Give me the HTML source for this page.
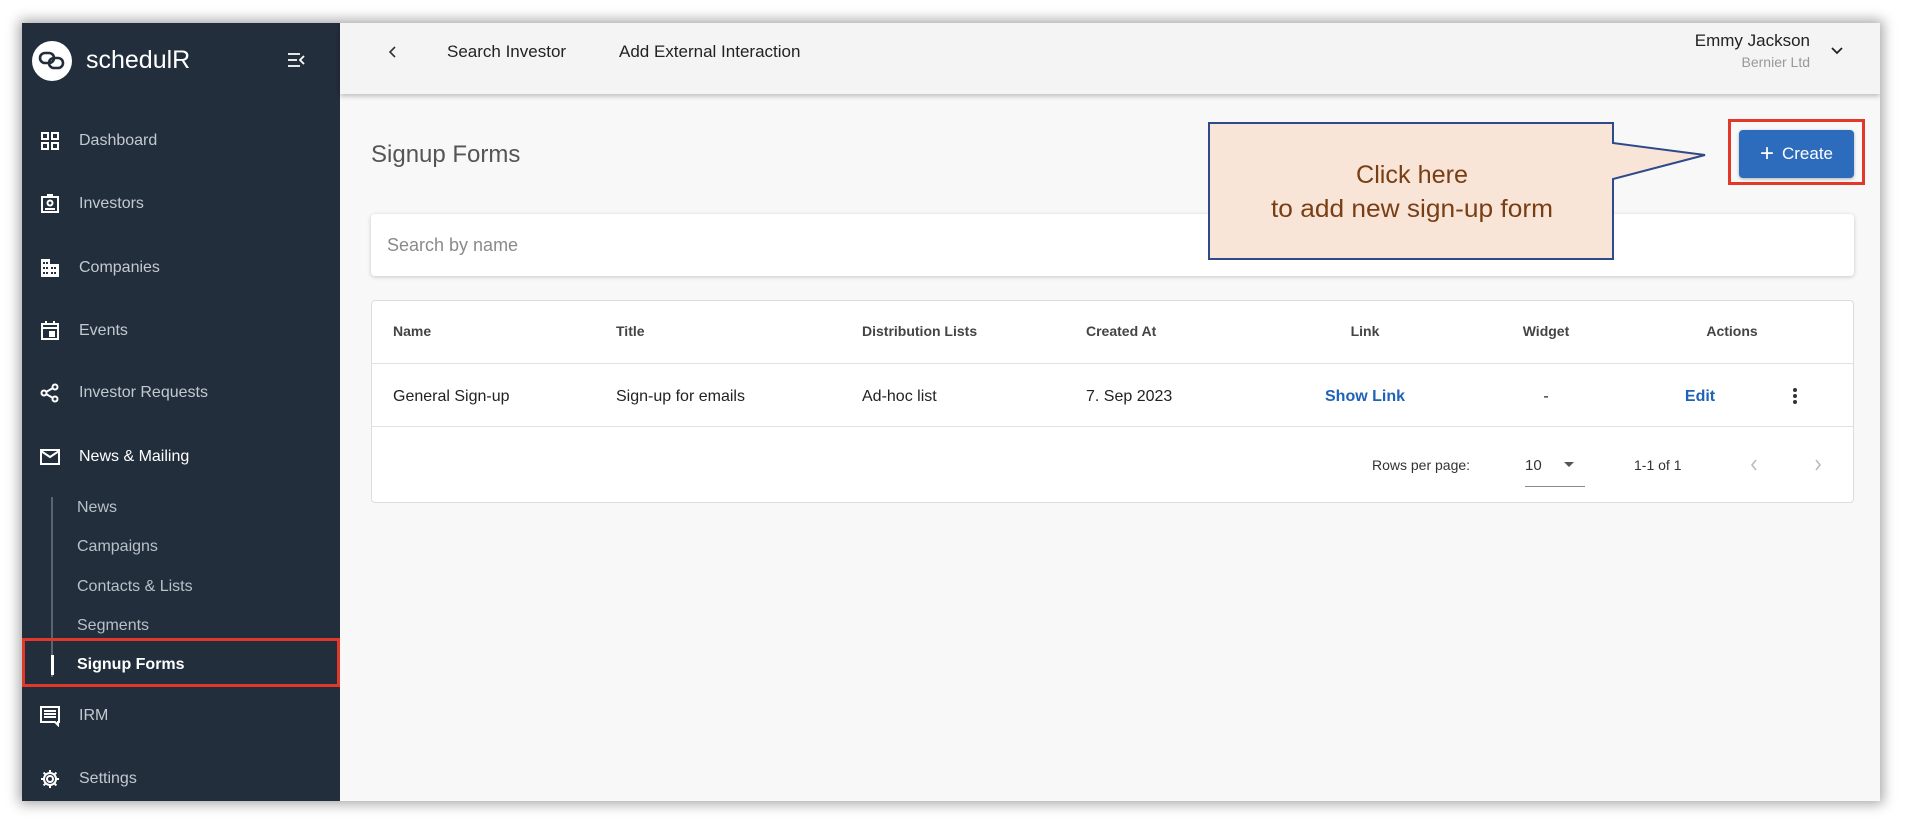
<!DOCTYPE html>
<html><head><meta charset="utf-8"><style>
*{box-sizing:border-box;margin:0;padding:0}
body{width:1910px;height:826px;background:#fff;font-family:"Liberation Sans",sans-serif;position:relative;overflow:hidden}
.frame{position:absolute;left:22px;top:23px;width:1858px;height:778px;background:#f8f8f8;box-shadow:0 0 12px 3px rgba(0,0,0,.35);overflow:hidden}
.side{position:absolute;left:0;top:0;width:318px;height:778px;background:#222e3c;color:#c9cfd6}
.abs{position:absolute}
.nav{position:absolute;left:57px;font-size:16px;color:#c3c9d0;transform:translateY(-50%)}
.ic{position:absolute;left:18px;transform:translateY(-50%)}
.sub{position:absolute;left:55px;font-size:16px;color:#b9c0c8;transform:translateY(-50%)}
.top{position:absolute;left:318px;top:0;width:1540px;height:71px;background:#f4f4f4;box-shadow:0 2px 5px rgba(0,0,0,.25)}
.card{position:absolute;background:#fff;border-radius:4px}
.th{position:absolute;top:20px;height:20px;line-height:20px;font-size:14px;font-weight:bold;color:#444}
.td{position:absolute;top:86px;height:20px;line-height:20px;font-size:16px;color:#222;white-space:nowrap}
.c{width:160px;margin-left:-80px;text-align:center}
</style></head><body>
<div class="frame">
 <div class="side">
  <div class="abs" style="left:10px;top:18px;width:40px;height:40px;border-radius:50%;background:#fff"></div>
  <svg class="abs" style="left:15px;top:27px" width="30" height="22" viewBox="0 0 30 22"><rect x="3" y="3" width="14" height="10" rx="5" fill="none" stroke="#222e3c" stroke-width="2.6"/><rect x="12" y="8" width="14" height="10" rx="5" fill="none" stroke="#222e3c" stroke-width="2.6"/></svg>
  <div class="abs" style="left:64px;top:23px;font-size:25px;color:#fff;font-weight:500">schedulR</div>
  <svg class="abs" style="left:264px;top:29px" width="20" height="16" viewBox="0 0 20 16"><path d="M2 2h12M2 8h9M2 14h12M18 4l-4 4 4 4" stroke="#fff" stroke-width="1.8" fill="none"/></svg>

  <svg class="ic" style="top:118px" width="20" height="20" viewBox="0 0 20 20" fill="none" stroke="#fff" stroke-width="2"><rect x="2" y="2" width="6" height="6"/><rect x="12" y="2" width="6" height="6"/><rect x="2" y="12" width="6" height="6"/><rect x="12" y="12" width="6" height="6"/></svg>
  <div class="nav" style="top:118px">Dashboard</div>
  <svg class="ic" style="top:181px" width="20" height="20" viewBox="0 0 20 20" fill="none" stroke="#fff" stroke-width="2"><rect x="2" y="3" width="16" height="15"/><circle cx="10" cy="9" r="2.5"/><path d="M5 15h10M7 1h6"/></svg>
  <div class="nav" style="top:181px">Investors</div>
  <svg class="ic" style="top:245px" width="20" height="20" viewBox="0 0 20 20" fill="#fff"><path d="M1 1h9v5h9v13H1zM3 4v2h2V4zm3 0v2h2V4zM3 9v2h2V9zm3 0v2h2V9zm5 0v2h2V9zm3 0v2h2V9zM3 14v2h2v-2zm3 0v2h2v-2zm5 0v2h2v-2zm3 0v2h2v-2z" fill-rule="evenodd"/></svg>
  <div class="nav" style="top:245px">Companies</div>
  <svg class="ic" style="top:308px" width="20" height="20" viewBox="0 0 20 20" fill="none" stroke="#fff" stroke-width="2"><rect x="2" y="3" width="16" height="15"/><path d="M2 7h16M6 0v4M14 0v4"/><rect x="10" y="11" width="4" height="4" fill="#fff"/></svg>
  <div class="nav" style="top:308px">Events</div>
  <svg class="ic" style="top:370px" width="20" height="20" viewBox="0 0 20 20" fill="none" stroke="#fff" stroke-width="2"><circle cx="15" cy="4" r="2.5"/><circle cx="4" cy="10" r="2.5"/><circle cx="15" cy="16" r="2.5"/><path d="M6 9l7-4M6 11l7 4"/></svg>
  <div class="nav" style="top:370px">Investor Requests</div>
  <svg class="ic" style="top:434px" width="20" height="20" viewBox="0 0 20 20" fill="none" stroke="#fff" stroke-width="2"><rect x="1" y="3" width="18" height="14"/><path d="M1 4l9 6 9-6"/></svg>
  <div class="nav" style="top:434px;color:#fff">News &amp; Mailing</div>
  <div class="abs" style="left:29px;top:474px;width:2px;height:180px;background:#5a6470"></div>
  <div class="sub" style="top:485px">News</div>
  <div class="sub" style="top:524px">Campaigns</div>
  <div class="sub" style="top:564px">Contacts &amp; Lists</div>
  <div class="sub" style="top:603px">Segments</div>
  <div class="abs" style="left:29px;top:632px;width:3px;height:20px;background:#fff"></div>
  <div class="sub" style="top:642px;color:#fff;font-weight:bold">Signup Forms</div>
  <div class="abs" style="left:0;top:615px;width:318px;height:49px;border:3px solid #e2382a"></div>
  <svg class="ic" style="top:693px" width="20" height="22" viewBox="0 0 20 22" fill="none" stroke="#fff" stroke-width="2"><path d="M1 2h18v15h-1v3l-3-3H1z"/><path d="M4 6h12M4 9h12M4 12h12"/></svg>
  <div class="nav" style="top:693px">IRM</div>
  <svg class="ic" style="top:756px" width="20" height="20" viewBox="0 0 20 20" fill="none" stroke="#fff" stroke-width="2"><circle cx="10" cy="10" r="3"/><path d="M10 1v3M10 16v3M1 10h3M16 10h3M3.6 3.6l2.1 2.1M14.3 14.3l2.1 2.1M3.6 16.4l2.1-2.1M14.3 5.7l2.1-2.1"/><circle cx="10" cy="10" r="6"/></svg>
  <div class="nav" style="top:756px">Settings</div>
 </div>

 <div class="top">
  <svg class="abs" style="left:47px;top:22px" width="12" height="14" viewBox="0 0 12 14"><path d="M8 2L3 7l5 5" stroke="#333" stroke-width="1.6" fill="none"/></svg>
  <div class="abs" style="left:107px;top:19px;font-size:17px;color:#222">Search Investor</div>
  <div class="abs" style="left:279px;top:19px;font-size:17px;color:#222">Add External Interaction</div>
  <div class="abs" style="right:70px;top:8px;font-size:17px;color:#222;text-align:right">Emmy Jackson</div>
  <div class="abs" style="right:70px;top:31px;font-size:14px;color:#999;text-align:right">Bernier Ltd</div>
  <svg class="abs" style="left:1490px;top:23px" width="14" height="10" viewBox="0 0 14 10"><path d="M2 2l5 5 5-5" stroke="#222" stroke-width="1.8" fill="none"/></svg>
 </div>

 <div class="abs" style="left:349px;top:118px;font-size:24px;color:#555">Signup Forms</div>

 <div class="abs" style="left:1706px;top:96px;width:137px;height:66px;border:3px solid #e2382a"></div>
 <div class="abs" style="left:1717px;top:107px;width:115px;height:48px;background:#2d6bbd;border-radius:4px;color:#fff;font-size:17px;line-height:48px;text-align:center;box-shadow:0 1px 3px rgba(0,0,0,.3)"><span style="font-size:24px;vertical-align:-2px;margin-right:8px">+</span>Create</div>

 <div class="card" style="left:349px;top:191px;width:1483px;height:62px;box-shadow:0 1px 4px rgba(0,0,0,.2)">
  <div class="abs" style="left:16px;top:21px;font-size:18px;color:#8a8a8a">Search by name</div>
 </div>

 <svg class="abs" style="left:1185px;top:98px" width="525" height="140" viewBox="0 0 525 140">
  <path d="M2 2H406V22L498 34L406 58V138H2Z" fill="#f8e5d8" stroke="#2e4a8a" stroke-width="2"/>
  <text x="205" y="62" text-anchor="middle" font-family="Liberation Sans, sans-serif" font-size="25" fill="#7a3e14" textLength="112" lengthAdjust="spacingAndGlyphs">Click here</text>
  <text x="205" y="96" text-anchor="middle" font-family="Liberation Sans, sans-serif" font-size="25" fill="#7a3e14" textLength="282" lengthAdjust="spacingAndGlyphs">to add new sign-up form</text>
 </svg>

 <div class="card" style="left:349px;top:277px;width:1483px;height:203px;border:1px solid #ddd">
  <div class="th" style="left:21px">Name</div>
  <div class="th" style="left:244px">Title</div>
  <div class="th" style="left:490px">Distribution Lists</div>
  <div class="th" style="left:714px">Created At</div>
  <div class="th c" style="left:993px">Link</div>
  <div class="th c" style="left:1174px">Widget</div>
  <div class="th c" style="left:1360px">Actions</div>
  <div class="abs" style="left:0;top:62px;width:100%;height:1px;background:#e2e2e2"></div>
  <div class="td" style="left:21px">General Sign-up</div>
  <div class="td" style="left:244px">Sign-up for emails</div>
  <div class="td" style="left:490px">Ad-hoc list</div>
  <div class="td" style="left:714px">7. Sep 2023</div>
  <div class="td c" style="left:993px;color:#1e63b8;font-weight:bold">Show Link</div>
  <div class="td c" style="left:1174px">-</div>
  <div class="td c" style="left:1328px;color:#1e63b8;font-weight:bold">Edit</div>
  <svg class="abs" style="left:1420px;top:86px" width="6" height="18" viewBox="0 0 6 18" fill="#333"><circle cx="3" cy="3" r="2"/><circle cx="3" cy="9" r="2"/><circle cx="3" cy="15" r="2"/></svg>
  <div class="abs" style="left:0;top:125px;width:100%;height:1px;background:#e2e2e2"></div>
  <div class="abs" style="left:1000px;top:156px;font-size:14px;color:#333">Rows per page:</div>
  <div class="abs" style="left:1153px;top:156px;font-size:15px;color:#333">10</div>
  <svg class="abs" style="left:1192px;top:161px" width="10" height="6"><path d="M0 0h10L5 5z" fill="#555"/></svg>
  <div class="abs" style="left:1153px;top:185px;width:60px;height:1px;background:#888"></div>
  <div class="abs" style="left:1262px;top:156px;font-size:14px;color:#333">1-1 of 1</div>
  <svg class="abs" style="left:1377px;top:157px" width="10" height="14"><path d="M7 2L3 7l4 5" stroke="#bbb" stroke-width="1.6" fill="none"/></svg>
  <svg class="abs" style="left:1441px;top:157px" width="10" height="14"><path d="M3 2l4 5-4 5" stroke="#bbb" stroke-width="1.6" fill="none"/></svg>
 </div>
</div>
</body></html>
